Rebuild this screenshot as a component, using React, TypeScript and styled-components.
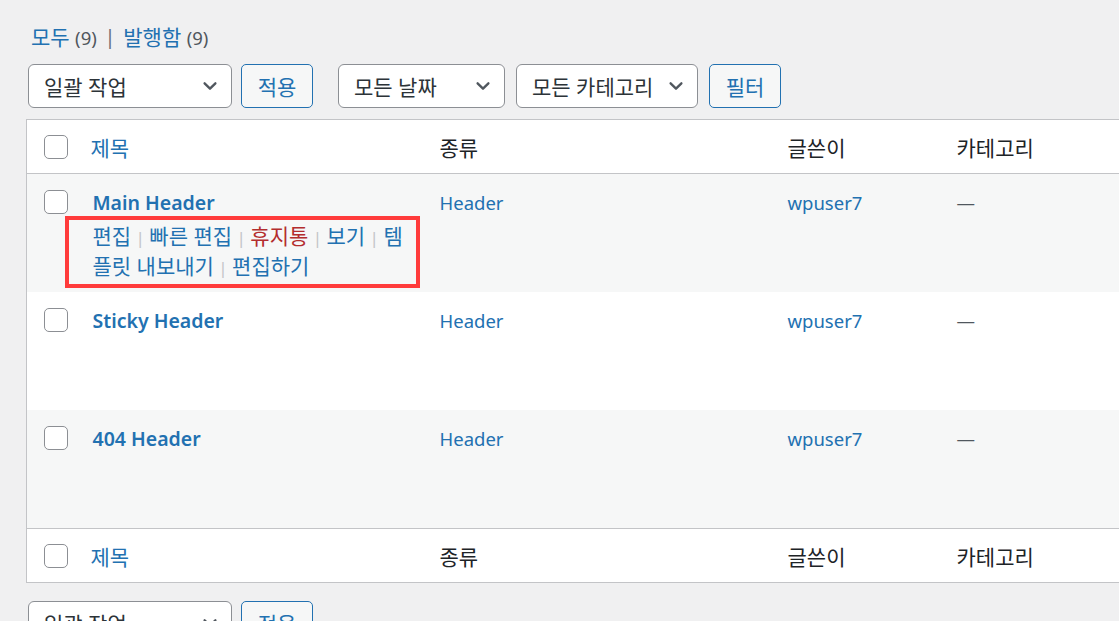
import React from "react";
import styled, { createGlobalStyle } from "styled-components";

const Global = createGlobalStyle`
  html, body { margin: 0; padding: 0; }
  body {
    background: #f0f0f1;
    overflow: hidden;
    font-family: "Noto Sans", "Noto Sans CJK KR", sans-serif;
    font-size: 21px;
    color: #3c434a;
  }
`;

const Wrap = styled.div`
  padding-left: 26px;
  width: 1260px;
`;

const SubSub = styled.ul`
  list-style: none;
  margin: 0;
  padding: 22px 0 0 5px;
  height: 30px;
  display: flex;
  align-items: center;
  gap: 8px;
  line-height: 30px;
  color: #646970;
`;

const SubLink = styled.a`
  color: #2271b1;
  text-decoration: none;
`;

const Count = styled.span`
  color: #50575e;
  font-size: 18.5px;
`;

const Bar = styled.span`
  color: #646970;
  font-size: 19px;
`;

const TableNav = styled.div<{ $top?: boolean }>`
  display: flex;
  align-items: center;
  padding-left: 2px;
  margin-top: ${(p) => (p.$top ? "12px" : "18px")};
  margin-bottom: ${(p) => (p.$top ? "11px" : "0")};
  height: 44px;
`;

const Group = styled.div<{ $gap?: number }>`
  display: flex;
  align-items: center;
  gap: ${(p) => p.$gap ?? 9}px;
  margin-right: 25px;
`;

const Select = styled.div<{ $w: number }>`
  box-sizing: border-box;
  width: ${(p) => p.$w}px;
  height: 44px;
  border: 1px solid #8c8f94;
  border-radius: 6px;
  background: #fff;
  display: flex;
  align-items: center;
  justify-content: space-between;
  padding: 0 12px 0 15px;
  color: #2c3338;
  font-size: 21px;
  white-space: nowrap;
`;

const Button = styled.button`
  box-sizing: border-box;
  width: 72px;
  height: 44px;
  border: 1px solid #2271b1;
  border-radius: 5px;
  background: #f6f7f7;
  color: #2271b1;
  font-family: inherit;
  font-size: 21px;
  padding: 0;
  cursor: pointer;
`;

const Chevron = () => (
  <svg width="18" height="18" viewBox="0 0 20 20" aria-hidden>
    <path d="M4 7 l6 6 l6 -6" fill="none" stroke="#50575e" strokeWidth="2.6" strokeLinecap="round" strokeLinejoin="round" />
  </svg>
);

const Table = styled.table`
  border-collapse: collapse;
  table-layout: fixed;
  width: 1234px;
  background: #fff;
  border: 1px solid #c3c4c7;
`;

const HeadRow = styled.tr<{ $foot?: boolean }>`
  height: 54px;
  ${(p) => (p.$foot ? "border-top: 1px solid #c3c4c7;" : "border-bottom: 1px solid #c3c4c7;")}
`;

const Th = styled.th<{ $link?: boolean }>`
  text-align: left;
  font-weight: 400;
  padding: 0 15px;
  height: 54px;
  box-sizing: border-box;
  vertical-align: middle;
  color: ${(p) => (p.$link ? "#2271b1" : "#1d2327")};
  font-size: 21px;
`;

const TitleTh = styled(Th)`
  padding-left: 16px;
`;

const CheckTh = styled.th`
  padding: 0 0 0 17px;
  vertical-align: middle;
  text-align: left;
`;

const Row = styled.tr<{ $alt?: boolean }>`
  height: 118px;
  background: ${(p) => (p.$alt ? "#f6f7f7" : "#fff")};
`;

const Td = styled.td`
  padding: 12px 15px;
  vertical-align: top;
  line-height: 30px;
  height: 118px;
  box-sizing: border-box;
  overflow: visible;
`;

const CheckTd = styled.td`
  padding: 16px 0 0 17px;
  vertical-align: top;
`;

const TitleTd = styled(Td)`
  position: relative;
  padding-left: 18px;
`;

const Box = styled.span`
  display: block;
  box-sizing: border-box;
  width: 24px;
  height: 24px;
  border: 1px solid #8c8f94;
  border-radius: 5px;
  background: #fff;
`;

const RowTitle = styled.a`
  display: block;
  height: 30px;
  color: #2271b1;
  font-weight: 600;
  font-size: 19.5px;
  text-decoration: none;
  line-height: 30px;
  padding-top: 2px;
  box-sizing: border-box;
`;

const Actions = styled.div<{ $hidden?: boolean }>`
  visibility: ${(p) => (p.$hidden ? "hidden" : "visible")};
  margin-top: 6px;
  height: 58px;
  line-height: 29px;
  font-size: 21px;
  color: #c3c4c7;
`;

const ActionLink = styled.a<{ $danger?: boolean }>`
  color: ${(p) => (p.$danger ? "#b32d2e" : "#2271b1")};
  text-decoration: none;
`;

const Sep = styled.span`
  color: #c3c4c7;
  font-size: 17px;
`;

const Highlight = styled.span`
  position: absolute;
  left: -10px;
  top: 42px;
  width: 355px;
  height: 72px;
  box-sizing: border-box;
  border: 4px solid #ff3b3b;
  pointer-events: none;
`;

const Plain = styled.div`
  height: 30px;
  padding-top: 2px;
  box-sizing: border-box;
  font-size: 18.5px;
`;

const CellLink = styled.a`
  color: #2271b1;
  text-decoration: none;
`;

const Dash = styled.span`
  color: #50575e;
`;

const actions = [
  { t: "편집" },
  { t: "빠른 편집" },
  { t: "휴지통", danger: true },
  { t: "보기" },
  { t: "템플릿 내보내기" },
  { t: "편집하기" },
];

const rows = [
  { title: "Main Header", alt: true, show: true },
  { title: "Sticky Header", alt: false, show: false },
  { title: "404 Header", alt: true, show: false },
];

const HeaderCells = () => (
  <>
    <CheckTh>
      <Box />
    </CheckTh>
    <TitleTh $link>제목</TitleTh>
    <Th>종류</Th>
    <Th>글쓴이</Th>
    <Th>카테고리</Th>
  </>
);

export default function App() {
  return (
    <>
      <Global />
      <Wrap>
        <SubSub>
          <li>
            <SubLink href="#">모두</SubLink> <Count>(9)</Count>
          </li>
          <Bar>|</Bar>
          <li>
            <SubLink href="#">발행함</SubLink> <Count>(9)</Count>
          </li>
        </SubSub>

        <TableNav $top>
          <Group>
            <Select $w={204}>
              일괄 작업 <Chevron />
            </Select>
            <Button>적용</Button>
          </Group>
          <Group $gap={11}>
            <Select $w={167}>
              모든 날짜 <Chevron />
            </Select>
            <Select $w={182}>
              모든 카테고리 <Chevron />
            </Select>
            <Button>필터</Button>
          </Group>
        </TableNav>

        <Table>
          <colgroup>
            <col style={{ width: 48 }} />
            <col style={{ width: 350 }} />
            <col style={{ width: 348 }} />
            <col style={{ width: 169 }} />
            <col />
          </colgroup>
          <thead>
            <HeadRow>
              <HeaderCells />
            </HeadRow>
          </thead>
          <tbody>
            {rows.map((r) => (
              <Row key={r.title} $alt={r.alt}>
                <CheckTd>
                  <Box />
                </CheckTd>
                <TitleTd>
                  <RowTitle href="#">{r.title}</RowTitle>
                  <Actions $hidden={!r.show}>
                    {actions.map((a, i) => (
                      <React.Fragment key={a.t}>
                        <ActionLink href="#" $danger={a.danger}>
                          {a.t}
                        </ActionLink>
                        {i < actions.length - 1 && <Sep> | </Sep>}
                      </React.Fragment>
                    ))}
                  </Actions>
                  {r.show && <Highlight />}
                </TitleTd>
                <Td>
                  <Plain>
                    <CellLink href="#">Header</CellLink>
                  </Plain>
                </Td>
                <Td>
                  <Plain>
                    <CellLink href="#">wpuser7</CellLink>
                  </Plain>
                </Td>
                <Td>
                  <Plain>
                    <Dash>—</Dash>
                  </Plain>
                </Td>
              </Row>
            ))}
          </tbody>
          <tfoot>
            <HeadRow $foot>
              <HeaderCells />
            </HeadRow>
          </tfoot>
        </Table>

        <TableNav>
          <Group>
            <Select $w={204}>
              일괄 작업 <Chevron />
            </Select>
            <Button>적용</Button>
          </Group>
        </TableNav>
      </Wrap>
    </>
  );
}
